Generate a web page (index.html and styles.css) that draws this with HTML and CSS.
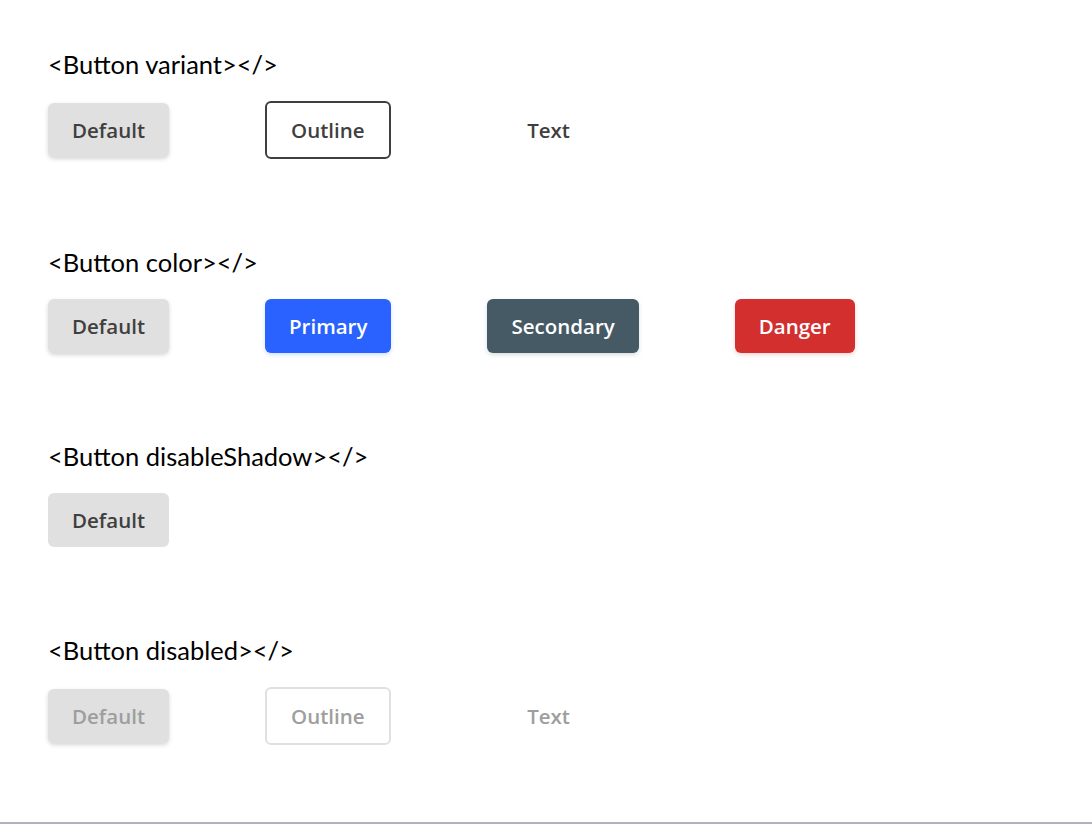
FILE: index.html
```html
<!DOCTYPE html>
<html lang="en">
<head>
<meta charset="utf-8">
<title>Button demo</title>
<link rel="stylesheet" href="styles.css">
</head>
<body>
<div class="page">
  <section class="demo">
    <h2 class="demo-title">&lt;Button variant&gt;&lt;/&gt;</h2>
    <div class="demo-row">
      <button class="btn btn-default">Default</button>
      <button class="btn btn-outline">Outline</button>
      <button class="btn btn-text">Text</button>
    </div>
  </section>
  <section class="demo">
    <h2 class="demo-title">&lt;Button color&gt;&lt;/&gt;</h2>
    <div class="demo-row">
      <button class="btn btn-default">Default</button>
      <button class="btn btn-primary">Primary</button>
      <button class="btn btn-secondary">Secondary</button>
      <button class="btn btn-danger">Danger</button>
    </div>
  </section>
  <section class="demo">
    <h2 class="demo-title">&lt;Button disableShadow&gt;&lt;/&gt;</h2>
    <div class="demo-row">
      <button class="btn btn-default btn-noshadow">Default</button>
    </div>
  </section>
  <section class="demo">
    <h2 class="demo-title">&lt;Button disabled&gt;&lt;/&gt;</h2>
    <div class="demo-row">
      <button class="btn btn-default" disabled>Default</button>
      <button class="btn btn-outline" disabled>Outline</button>
      <button class="btn btn-text" disabled>Text</button>
    </div>
  </section>
</div>
</body>
</html>
```

FILE: styles.css
```css
html, body {
  margin: 0;
  padding: 0;
  background: #ffffff;
}

body {
  font-family: "Lato", "Noto Sans", sans-serif;
  color: #000;
}

.page {
  min-height: 100vh;
  box-sizing: border-box;
  padding: 48px 48px 0 48px;
  border-bottom: 2px solid #b2b2bc;
  display: flex;
  flex-direction: column;
  gap: 87px;
}

.demo {
  display: flex;
  flex-direction: column;
  gap: 21px;
}

.demo-title {
  margin: 0;
  font-size: 25.5px;
  line-height: 32px;
  font-weight: 400;
}

.demo-row {
  display: flex;
  align-items: center;
  gap: 96px;
}

.btn {
  font-family: "Open Sans", "Noto Sans", sans-serif;
  font-size: 20.5px;
  line-height: 30px;
  font-weight: 600;
  padding: 12px 24px;
  border: none;
  border-radius: 6px;
  cursor: pointer;
  color: #3f3f3f;
  background: transparent;
}

.btn-default {
  background: #e0e0e0;
  box-shadow: 0 2px 4px rgba(51, 51, 51, 0.2);
}

.btn-noshadow {
  box-shadow: none;
}

.btn-outline {
  border: 2px solid #3f3f3f;
  background: #fff;
}

.btn-text {
  min-width: 124px;
}

.btn-primary {
  background: #2962ff;
  color: #fff;
  box-shadow: 0 2px 4px rgba(41, 98, 255, 0.2);
}

.btn-secondary {
  background: #455a64;
  color: #fff;
  box-shadow: 0 2px 4px rgba(69, 90, 100, 0.2);
}

.btn-danger {
  background: #d32f2f;
  color: #fff;
  box-shadow: 0 2px 4px rgba(211, 47, 47, 0.2);
}

.btn:disabled {
  color: #9e9e9e;
  cursor: default;
}

.btn-outline:disabled {
  border-color: #e0e0e0;
}
```
